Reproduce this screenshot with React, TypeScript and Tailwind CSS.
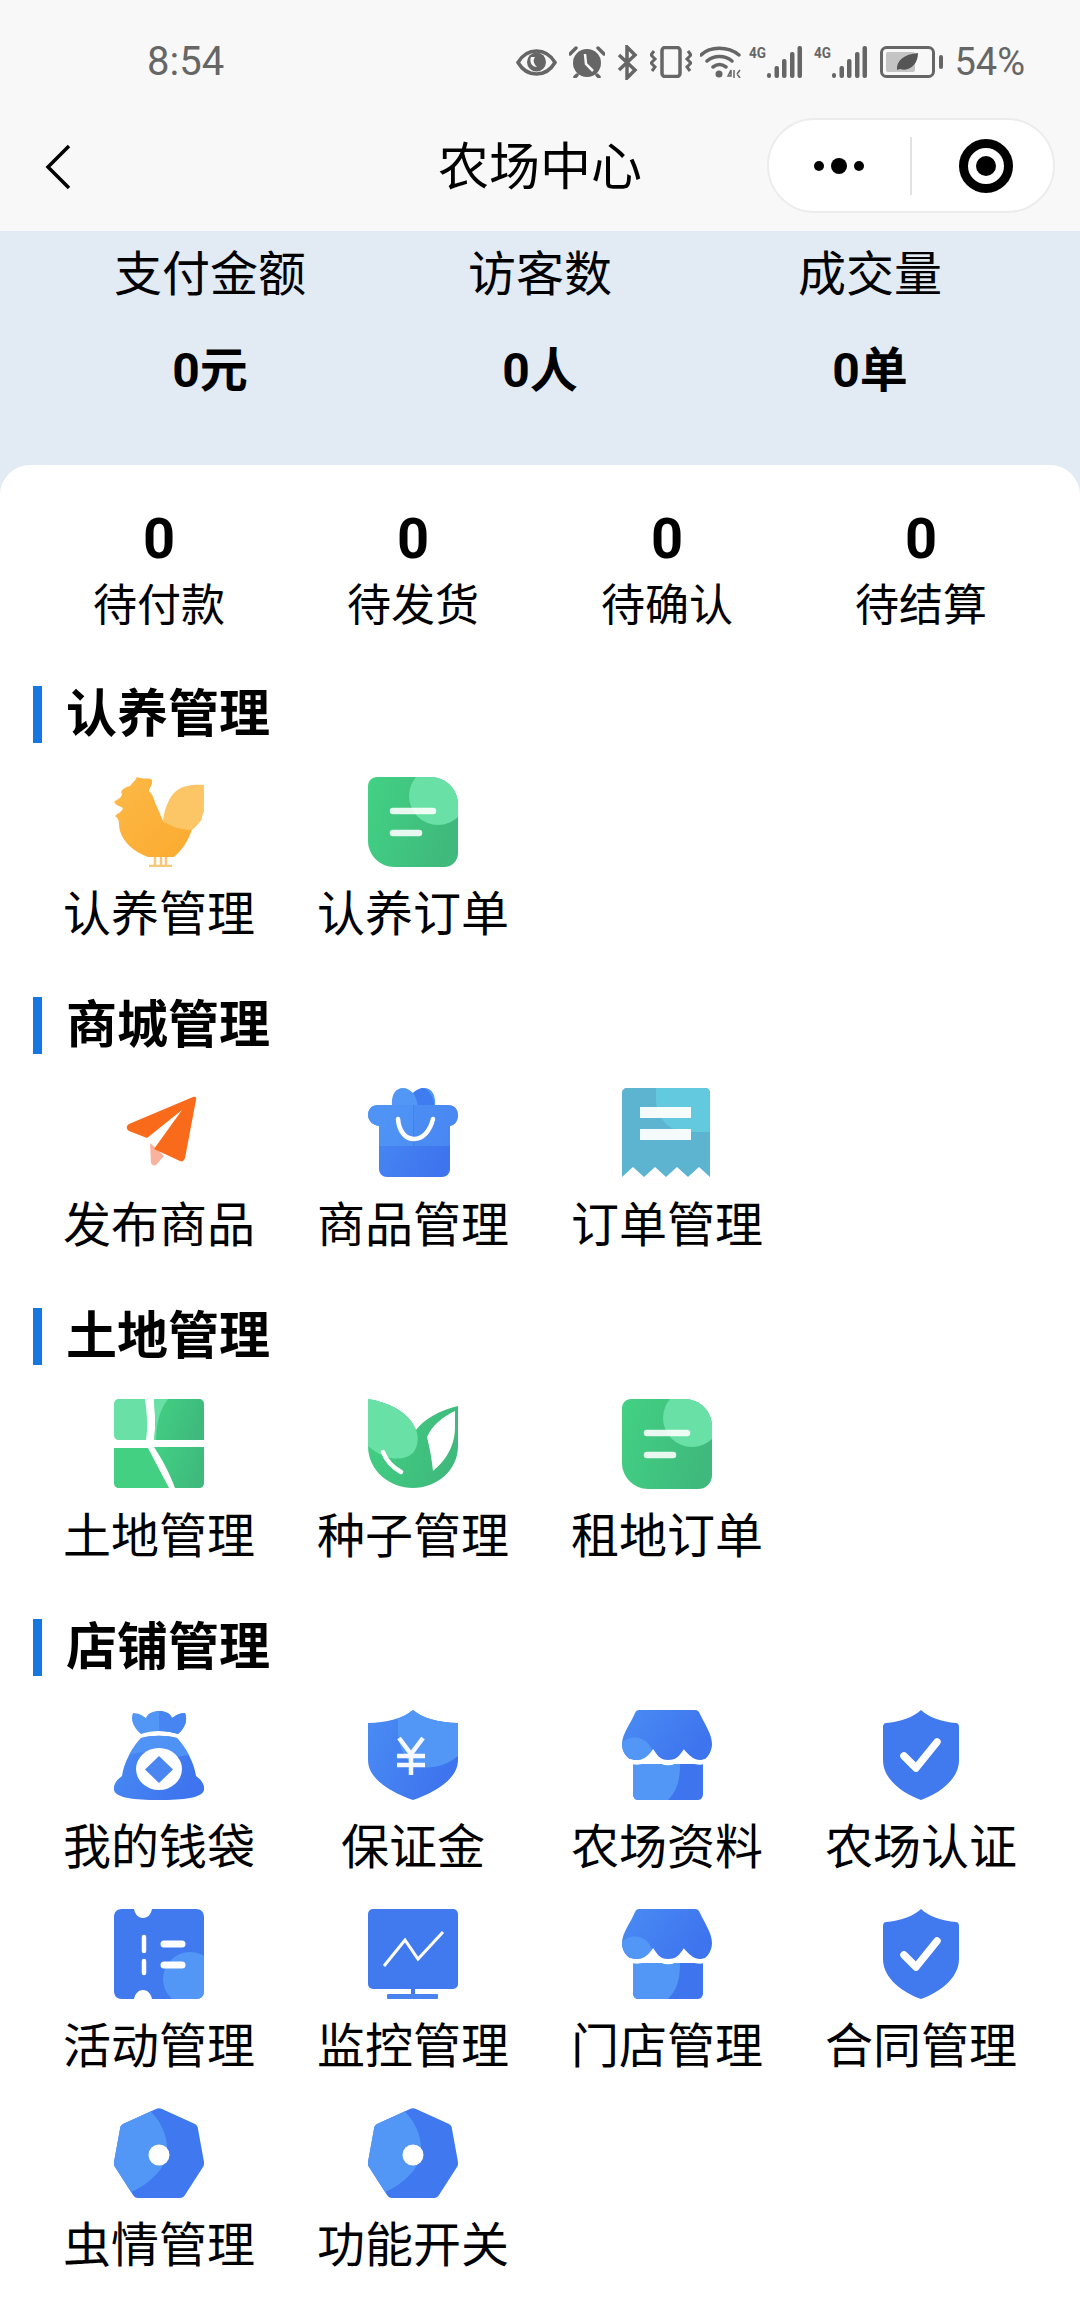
import React from 'react';

const BLUE_LIGHT = '#5297f6';
const GREEN_LIGHT = '#69e0a5';

const Icon = ({ children }: { children: React.ReactNode }) => (
  <svg viewBox="0 0 90 90" className="w-[90px] h-[90px] block">
    <defs>
      <linearGradient id="blue" x1="0" y1="0" x2="1" y2="0.4">
        <stop offset="0" stopColor="#4a8cf4" />
        <stop offset="1" stopColor="#3e74ee" />
      </linearGradient>
      <linearGradient id="green" x1="0" y1="0" x2="1" y2="0.3">
        <stop offset="0" stopColor="#42d184" />
        <stop offset="1" stopColor="#3fba7c" />
      </linearGradient>
    </defs>
    {children}
  </svg>
);

const DocIcon = ({ id }: { id: string }) => (
  <Icon>
    <clipPath id={id}>
      <path d="M9 0H62C78 0 90 12 90 28V76C90 84 84 90 76 90H26C12 90 0 78 0 64V9C0 4 4 0 9 0Z" />
    </clipPath>
    <g clipPath={`url(#${id})`}>
      <rect width="90" height="90" fill="url(#green)" />
      <circle cx="70" cy="19" r="29" fill={GREEN_LIGHT} />
    </g>
    <path d="M25 34H65M25 56H51" stroke="#fff" strokeOpacity="0.88" strokeWidth="6.5" strokeLinecap="round" />
  </Icon>
);

const RoosterIcon = () => (
  <Icon>
    <defs>
      <linearGradient id="orange" x1="0" y1="0" x2="1" y2="1">
        <stop offset="0" stopColor="#fdb947" />
        <stop offset="1" stopColor="#fbaa2f" />
      </linearGradient>
    </defs>
    <path d="M41 78V88M47 78V88M52 78V88M35 89H58" stroke="#f6c777" strokeWidth="2.5" />
    <path
      d="M23 0C29 3 36 0 38 3C39 8 35 11 35 14C40 19 40 24 43 30C46 36 47 41 50 45L78 52C74 65 67 74 60 80H34C21 75 10 67 6 54C4 48 7 43 1 39C4 36 8 35 9 31C5 29 2 28 0 25C3 22 7 22 8 17C5 13 12 10 16 9C18 6 21 4 23 0Z"
      fill="url(#orange)"
    />
    <path
      d="M49 44C50 35 53 25 59 17C66 9 77 7 90 8C92 13 89 16 91 20C92 25 89 27 90 31C91 36 87 38 88 42C85 46 83 49 78 53C66 53 56 49 49 44Z"
      fill="#fcc566"
    />
  </Icon>
);

const PlaneIcon = () => (
  <Icon>
    <path d="M36 55L42 60L50 68L42 77C40 78 38 77 37 75Z" fill="#f9b39c" />
    <path d="M79 9C81 8 83 9 82 12L71 70C70 73 68 74 66 73L40 61L68 22L33 50L15 43C12 41 12 38 15 36Z" fill="#f96a1b" />
  </Icon>
);

const BagIcon = () => (
  <Icon>
    <path d="M24 18C23 6 28 0 35 0C39 0 42 2 45 5C48 2 52 0 56 0C64 0 68 7 67 18Z" fill={BLUE_LIGHT} />
    <path d="M45 5C51 12 52 30 47 36H62C69 24 68 6 56 0C52 0 48 2 45 5Z" fill="#3f7cef" />
    <path
      d="M10 17H80C86 17 90 21 90 27C90 33 87 37 82 38V81C82 86 78 89 74 89H19C15 89 11 86 11 81V38C5 37 0 33 0 27C0 21 4 17 10 17Z"
      fill="url(#blue)"
    />
    <path d="M10 17H45V58H11V38C5 37 0 33 0 27C0 21 4 17 10 17Z" fill={BLUE_LIGHT} opacity="0.75" />
    <path d="M46 17H80C86 17 90 21 90 27C90 33 87 37 82 38V58H46Z" fill={BLUE_LIGHT} opacity="0.55" />
    <path d="M30 31C31 43 37 51 46 51C55 51 62 43 65 31" fill="none" stroke="#fff" strokeWidth="4.5" strokeLinecap="round" />
  </Icon>
);

const ReceiptIcon = () => (
  <Icon>
    <clipPath id="receipt">
      <path d="M5 0H83C86 0 88 2 88 5V89L77 79L66 89L55 79L44 89L33 79L22 89L11 79L0 89V5C0 2 2 0 5 0Z" />
    </clipPath>
    <g clipPath="url(#receipt)">
      <rect width="90" height="90" fill="#5db4d1" />
      <path d="M34 0H90V44H64C48 44 34 30 34 12Z" fill="#62c9de" />
    </g>
    <rect x="18" y="19" width="51" height="11" fill="#fff" fillOpacity="0.94" />
    <rect x="18" y="41" width="51" height="11" fill="#fff" fillOpacity="0.94" />
  </Icon>
);

const LandIcon = () => (
  <Icon>
    <path d="M5 0H31C33 15 34 28 32 41H5C2 41 0 39 0 36V5C0 2 2 0 5 0Z" fill={GREEN_LIGHT} />
    <path d="M40 0H85C88 0 90 2 90 5V41H40C42 28 41 14 40 0Z" fill="url(#green)" />
    <path d="M40 0H54C46 10 42 24 42 41H40C42 28 41 14 40 0Z" fill={GREEN_LIGHT} />
    <path d="M0 49H34L55 89H5C2 89 0 87 0 84Z" fill="#43d083" />
    <path d="M40 48H90V84C90 87 88 89 85 89H61C56 75 48 60 40 48Z" fill="url(#green)" />
  </Icon>
);

const LeafIcon = () => (
  <Icon>
    <path d="M0 0C24 4 42 15 48 31C56 20 72 11 90 7V47C90 72 68 89 45 89C22 89 0 72 0 47Z" fill="url(#green)" />
    <path d="M0 0C24 4 42 15 48 31C51 38 50 48 45 54C34 64 14 60 0 47Z" fill={GREEN_LIGHT} />
    <path d="M87 12C76 17 64 26 59 38C62 50 64 62 65 72C77 62 87 48 87 28Z" fill="#fff" />
    <path d="M15 53C18 61 24 68 33 73" fill="none" stroke="#fff" strokeWidth="4.5" strokeLinecap="round" />
  </Icon>
);

const MoneyBagIcon = () => (
  <Icon>
    <path d="M19 3C25 3 29 6 32 8C34 3 39 1 45 1C51 1 56 3 58 8C61 6 65 3 71 3C74 10 71 18 64 24C52 20 38 20 27 24C20 18 16 10 19 3Z" fill={BLUE_LIGHT} />
    <path d="M45 1C51 1 56 3 58 8C61 6 65 3 71 3C74 10 71 18 64 24C58 22 51 21 45 21Z" fill="#4685f2" />
    <path d="M27 28C38 25 52 25 63 28C72 38 80 52 82 66C88 70 91 76 90 80C88 88 70 90 45 90C20 90 2 88 0 80C-1 76 2 70 8 66C10 52 18 38 27 28Z" fill="url(#blue)" />
    <path d="M27 28C38 25 52 25 63 28C68 33 72 39 75 45C52 50 34 38 15 45C18 39 22 33 27 28Z" fill={BLUE_LIGHT} opacity="0.8" />
    <ellipse cx="45" cy="59" rx="23" ry="21" fill="#fff" />
    <path d="M45 46L59 59.5L45 73L31 59.5Z" fill="#4a86f2" />
  </Icon>
);

const ShieldPath = 'M45 0C54 8 72 13 90 13V50C90 70 65 83 45 90C25 83 0 70 0 50V13C18 13 36 8 45 0Z';

const YenShieldIcon = () => (
  <Icon>
    <clipPath id="yen-shield">
      <path d={ShieldPath} />
    </clipPath>
    <g clipPath="url(#yen-shield)">
      <rect width="90" height="90" fill="url(#blue)" />
      <path d="M30 0H90V46C78 56 62 60 48 56C36 50 30 36 30 20Z" fill={BLUE_LIGHT} />
    </g>
    <path d="M31 28L43 44L55 28M29 46H57M29 55H57M43 44V65" fill="none" stroke="#fff" strokeOpacity="0.94" strokeWidth="4.5" />
  </Icon>
);

const StoreIcon = ({ id }: { id: string }) => (
  <Icon>
    <clipPath id={id}>
      <path d="M11 54H81V84C81 87 79 90 76 90H16C13 90 11 87 11 84Z" />
    </clipPath>
    <g clipPath={`url(#${id})`}>
      <rect x="11" y="54" width="70" height="36" fill="#3e74ee" />
      <path d="M11 54H58C58 68 56 80 46 90H11Z" fill={BLUE_LIGHT} />
    </g>
    <path d="M17 0H73C76 0 77 2 78 4C82 13 90 24 90 34C90 40 87 46 83 49C76 52 68 48 62 42C58 47 53 50 46 50C39 50 35 47 31 42C26 48 19 52 8 49C3 46 0 40 0 34C0 24 9 13 13 3C14 1 15 0 17 0Z" fill="url(#blue)" />
    <path d="M0 34C3 28 12 26 20 29C26 32 29 37 31 42C26 48 19 52 8 49C3 46 0 40 0 34Z" fill={BLUE_LIGHT} />
    <path d="M7 51C18 55 26 50 31 43C36 51 41 53 46 53C53 53 58 49 62 43C68 50 76 55 84 51" fill="none" stroke="#fff" strokeWidth="4.5" />
  </Icon>
);

const CheckShieldIcon = () => (
  <Icon>
    <path d="M45 0C52 7 66 12 80 13C82 13 83 15 83 17V50C83 70 62 84 45 90C28 84 7 70 7 50V17C7 15 8 13 10 13C24 12 38 7 45 0Z" fill="#4179ef" />
    <path d="M28 46L40 58L61 32" fill="none" stroke="#fff" strokeWidth="7.5" strokeLinecap="round" strokeLinejoin="round" />
  </Icon>
);

const TicketIcon = () => (
  <Icon>
    <clipPath id="ticket">
      <path d="M8 0H20C21 5 24 9 29 9C34 9 37 5 38 0H82C87 0 90 3 90 8V82C90 87 87 90 82 90H38C37 85 34 81 29 81C24 81 21 85 20 90H8C3 90 0 87 0 82V8C0 3 3 0 8 0Z" />
    </clipPath>
    <g clipPath="url(#ticket)">
      <rect width="90" height="90" fill="#4179ef" />
      <circle cx="76" cy="70" r="27" fill={BLUE_LIGHT} />
    </g>
    <path d="M30 28V42M30 52V64" stroke="#fff" strokeWidth="4.5" strokeLinecap="round" />
    <path d="M50 35H68M50 56H68" stroke="#fff" strokeWidth="7" strokeLinecap="round" />
  </Icon>
);

const MonitorIcon = () => (
  <Icon>
    <rect width="90" height="80" rx="5" fill="#4179ef" />
    <rect x="43" y="80" width="4" height="7" fill="#4179ef" />
    <rect x="19" y="85" width="51" height="5" rx="1" fill="#4a82f0" />
    <path d="M16 57L37 31L50 50L75 23" fill="none" stroke="#fff" strokeWidth="3" />
  </Icon>
);

const HexIcon = ({ id }: { id: string }) => (
  <Icon>
    <clipPath id={id}>
      <path d="M42 1C44 0 46 0 48 1L81 16C83 17 84 19 84 21L90 54C90 56 90 58 89 59L71 87C70 89 68 90 66 90H24C22 90 20 89 19 87L1 59C0 58 0 56 0 54L6 21C6 19 7 17 9 16Z" />
    </clipPath>
    <g clipPath={`url(#${id})`}>
      <rect width="90" height="90" fill="#3f78ef" />
      <path d="M-5 0H33C50 14 56 36 52 50C48 66 26 84 0 90H-5Z" fill={BLUE_LIGHT} />
    </g>
    <circle cx="45" cy="47" r="10.5" fill="#fff" />
  </Icon>
);

type Item = { label: string; icon: React.ReactNode };

const sections: { title: string; items: Item[] }[] = [
  {
    title: '认养管理',
    items: [
      { label: '认养管理', icon: <RoosterIcon /> },
      { label: '认养订单', icon: <DocIcon id="doc-a" /> },
    ],
  },
  {
    title: '商城管理',
    items: [
      { label: '发布商品', icon: <PlaneIcon /> },
      { label: '商品管理', icon: <BagIcon /> },
      { label: '订单管理', icon: <ReceiptIcon /> },
    ],
  },
  {
    title: '土地管理',
    items: [
      { label: '土地管理', icon: <LandIcon /> },
      { label: '种子管理', icon: <LeafIcon /> },
      { label: '租地订单', icon: <DocIcon id="doc-b" /> },
    ],
  },
  {
    title: '店铺管理',
    items: [
      { label: '我的钱袋', icon: <MoneyBagIcon /> },
      { label: '保证金', icon: <YenShieldIcon /> },
      { label: '农场资料', icon: <StoreIcon id="store-a" /> },
      { label: '农场认证', icon: <CheckShieldIcon /> },
      { label: '活动管理', icon: <TicketIcon /> },
      { label: '监控管理', icon: <MonitorIcon /> },
      { label: '门店管理', icon: <StoreIcon id="store-b" /> },
      { label: '合同管理', icon: <CheckShieldIcon /> },
      { label: '虫情管理', icon: <HexIcon id="hex-a" /> },
      { label: '功能开关', icon: <HexIcon id="hex-b" /> },
    ],
  },
];

const Signal = () => (
  <svg viewBox="0 0 53 33" className="w-[53px] h-[33px] block">
    <text x="0" y="12" fontSize="14" fontWeight="700" fill="#666" fontFamily="Roboto, sans-serif" textLength="17" lengthAdjust="spacingAndGlyphs">4G</text>
    <rect x="18" y="27" width="4" height="5" rx="2" fill="#666" />
    <rect x="25.5" y="20" width="4.5" height="12" rx="2" fill="#666" />
    <rect x="33" y="13" width="4.5" height="19" rx="2" fill="#666" />
    <rect x="41" y="6" width="4.5" height="26" rx="2" fill="#666" />
    <rect x="48.5" y="0" width="4.5" height="32" rx="2" fill="#666" />
  </svg>
);

const StatusIcons = () => (
  <div className="flex items-center">
    <svg viewBox="0 0 41 27" className="w-[41px] h-[27px]">
      <path d="M2 13.5C7 5 13 2 20.5 2C28 2 34 5 39 13.5C34 22 28 25 20.5 25C13 25 7 22 2 13.5Z" fill="none" stroke="#666" strokeWidth="3.5" />
      <circle cx="20.5" cy="13" r="9.5" fill="#666" />
      <path d="M15 8C13 13 16 18 21 18C17 14 17 11 19 8Z" fill="#f8f8f8" />
    </svg>
    <svg viewBox="0 0 36 32" className="w-[36px] h-[32px] ml-[12px]">
      <circle cx="18" cy="17" r="14" fill="#666" />
      <path d="M1 8L7 2M35 8L29 2M8 29L6 31M28 29L30 31" stroke="#666" strokeWidth="3.5" strokeLinecap="round" />
      <path d="M16 8L17 18L24 25" fill="none" stroke="#f8f8f8" strokeWidth="2.5" />
    </svg>
    <svg viewBox="0 0 21 35" className="w-[21px] h-[35px] ml-[12px]">
      <path d="M2 10L18 25L10 33V2L18 10L2 25" fill="none" stroke="#666" strokeWidth="3.5" />
    </svg>
    <svg viewBox="0 0 42 32" className="w-[42px] h-[32px] ml-[12px]">
      <rect x="12" y="1.5" width="18" height="29" rx="3" fill="none" stroke="#666" strokeWidth="3.5" />
      <path d="M4 5L1 9L5 13L1 17L5 21L2 25M38 5L41 9L37 13L41 17L37 21L40 25" fill="none" stroke="#666" strokeWidth="3" />
    </svg>
    <svg viewBox="0 0 41 32" className="w-[41px] h-[32px] ml-[8px]">
      <path d="M1 9C10 0 28 0 39 9M7 15C14 9 25 9 32 15M13 21C17 18 22 18 26 21" fill="none" stroke="#666" strokeWidth="3.5" strokeLinecap="round" />
      <circle cx="19" cy="28" r="3.5" fill="#666" />
      <path d="M28 30L31 24V30ZM34 24V32M37 28L40 24M37 28L40 32" stroke="#666" strokeWidth="1.5" fill="none" />
    </svg>
    <div className="ml-[8px]"><Signal /></div>
    <div className="ml-[12px]"><Signal /></div>
    <svg viewBox="0 0 63 32" className="w-[63px] h-[32px] ml-[13px]">
      <rect x="1.5" y="1.5" width="52" height="29" rx="5" fill="none" stroke="#666" strokeWidth="3" />
      <rect x="6" y="6" width="29" height="20" rx="2" fill="#c4c4c4" />
      <path d="M17 24C16 15 24 8 38 7C38 18 30 26 20 23Z" fill="#555" />
      <rect x="59" y="9" width="4" height="14" rx="2" fill="#666" />
    </svg>
    <span className="ml-[11px] text-[38px] leading-none text-[#666] font-['Roboto',sans-serif]">54%</span>
  </div>
);

const App = () => {
  return (
    <div className="w-[1080px] h-[2310px] overflow-hidden bg-white text-black font-['Roboto','Noto_Sans_CJK_SC',sans-serif]">
      <div className="bg-[#f8f8f8] h-[231px]">
        <div className="h-[118px] pt-[6px] pl-[147px] pr-[55px] flex items-center justify-between">
          <span className="text-[40px] leading-none text-[#666]">8:54</span>
          <StatusIcons />
        </div>
        <div className="relative h-[113px] flex items-start">
          <svg viewBox="0 0 26 46" className="w-[26px] h-[46px] ml-[45px] mt-[26px]">
            <path d="M24 2L3 23L24 44" fill="none" stroke="#000" strokeWidth="3.5" />
          </svg>
          <span className="absolute left-0 right-0 top-[20px] text-center text-[51px] leading-[60px]">农场中心</span>
          <div className="absolute left-[767px] top-0 w-[288px] h-[95px] rounded-full bg-white border-2 border-[#ececec] flex items-center">
            <div className="w-[139px] flex items-center justify-center gap-[7px]">
              <span className="w-[10px] h-[10px] rounded-full bg-black" />
              <span className="w-[16px] h-[16px] rounded-full bg-black" />
              <span className="w-[10px] h-[10px] rounded-full bg-black" />
            </div>
            <div className="ml-[2px] w-[2px] h-[58px] bg-[#e2e2e2]" />
            <div className="flex-1 pl-[6px] flex items-center justify-center">
              <div className="w-[54px] h-[54px] rounded-full border-[9px] border-black bg-white flex items-center justify-center">
                <span className="w-[20px] h-[20px] rounded-full bg-black" />
              </div>
            </div>
          </div>
        </div>
      </div>

      <div className="bg-[#e2ebf3] h-[264px] pt-[14px] px-[45px] grid grid-cols-3 content-start text-center text-[48px] leading-[60px]">
        <span>支付金额</span>
        <span>访客数</span>
        <span>成交量</span>
        <span className="mt-[36px] font-bold">0元</span>
        <span className="mt-[36px] font-bold">0人</span>
        <span className="mt-[36px] font-bold">0单</span>
      </div>

      <div className="-mt-[30px] relative bg-white rounded-t-[30px] pt-[44px]">
        <div className="px-[32px] grid grid-cols-4 text-center">
          {['待付款', '待发货', '待确认', '待结算'].map((label) => (
            <div key={label} className="flex flex-col">
              <span className="text-[56px] leading-[60px] font-bold">0</span>
              <span className="mt-[7px] text-[44px] leading-[60px]">{label}</span>
            </div>
          ))}
        </div>

        <div className="mt-[50px] flex flex-col gap-[52px]">
          {sections.map((section) => (
            <section key={section.title}>
              <div className="h-[57px] pl-[33px] flex items-center">
                <span className="w-[9px] h-full bg-[#1677e2]" />
                <h2 className="ml-[24px] text-[51px] leading-[57px] font-bold">{section.title}</h2>
              </div>
              <div className="mt-[34px] px-[32px] grid grid-cols-4 gap-y-[31px]">
                {section.items.map((item) => (
                  <div key={item.label} className="flex flex-col items-center">
                    {item.icon}
                    <span className="mt-[18px] text-[48px] leading-[60px] whitespace-nowrap">{item.label}</span>
                  </div>
                ))}
              </div>
            </section>
          ))}
        </div>
      </div>
    </div>
  );
};

export default App;
